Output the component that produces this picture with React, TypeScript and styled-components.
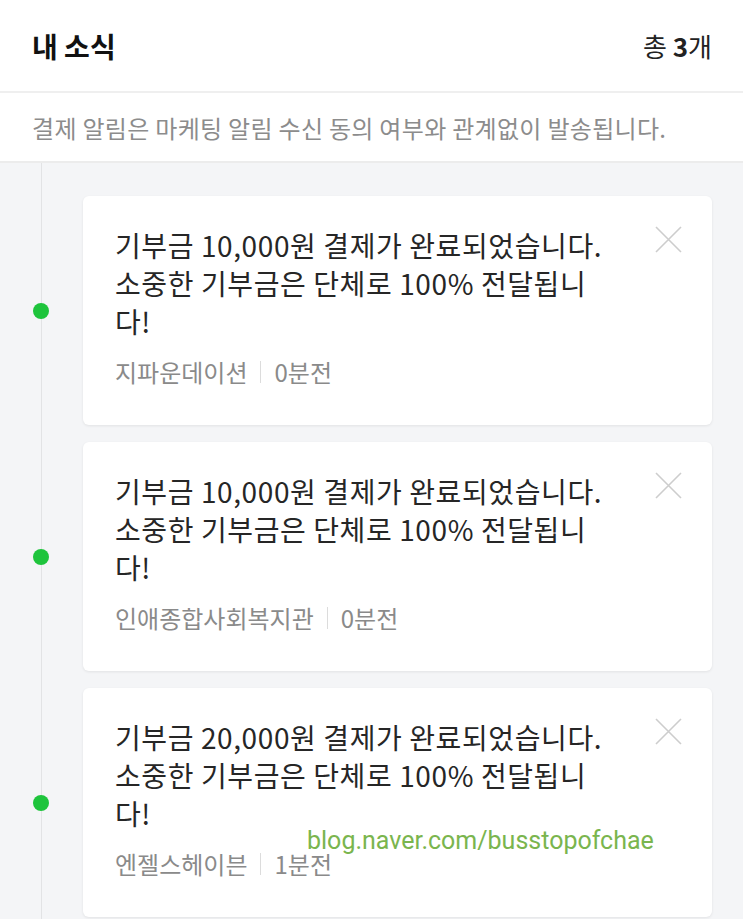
import styled, { createGlobalStyle } from "styled-components";

const GlobalStyle = createGlobalStyle`
  body {
    margin: 0;
    background: #f4f5f7;
    font-family: "Noto Sans CJK KR", "Noto Sans", sans-serif;
  }
`;

const Page = styled.div`
  position: relative;
  min-height: 100vh;
  background: #f4f5f7;
  overflow: hidden;
`;

const Header = styled.header`
  height: 91px;
  padding: 0 31px 0 32px;
  display: flex;
  align-items: center;
  justify-content: space-between;
  background: #fff;
  border-bottom: 2px solid #efefef;
`;

const Title = styled.h1`
  margin: 0;
  font-size: 28px;
  font-weight: 700;
  color: #111;
`;

const Count = styled.div`
  font-size: 26px;
  color: #222;
  b {
    font-weight: 700;
  }
`;

const Notice = styled.p`
  margin: 0;
  height: 68px;
  padding-left: 32px;
  display: flex;
  align-items: center;
  background: #fff;
  border-bottom: 2px solid #ececec;
  font-size: 24px;
  letter-spacing: 0.3px;
  color: #8c8c8c;
`;

const Timeline = styled.ul`
  position: relative;
  list-style: none;
  margin: 0;
  padding: 33px 31px 40px 83px;
  display: flex;
  flex-direction: column;
  gap: 17px;
  &::before {
    content: "";
    position: absolute;
    left: 41px;
    top: 0;
    bottom: 0;
    width: 1px;
    background: #e2e3e5;
  }
`;

const Item = styled.li`
  position: relative;
  &::before {
    content: "";
    position: absolute;
    left: -50px;
    top: 50%;
    width: 16px;
    height: 16px;
    margin-top: -8px;
    border-radius: 50%;
    background: #1ec43c;
  }
`;

const Card = styled.div`
  position: relative;
  background: #fff;
  border-radius: 6px;
  box-shadow: 0 1px 3px rgba(0, 0, 0, 0.08);
  padding: 30px 32px 38px 32px;
`;

const Message = styled.p`
  margin: 0;
  max-width: 495px;
  font-size: 28px;
  line-height: 38px;
  letter-spacing: 0.6px;
  color: #262626;
`;

const Sentence = styled.span`
  display: block;
`;

const Meta = styled.div`
  margin-top: 17px;
  display: flex;
  align-items: center;
  font-size: 24px;
  line-height: 30px;
  color: #8a8a8a;
`;

const Divider = styled.span`
  width: 1px;
  height: 22px;
  margin: 0 13px;
  background: #dcdcdc;
`;

const CloseButton = styled.button`
  position: absolute;
  top: 30px;
  right: 30px;
  width: 27px;
  height: 27px;
  padding: 0;
  border: none;
  background: none;
  cursor: pointer;
  svg {
    display: block;
  }
`;

const Watermark = styled.div`
  position: absolute;
  left: 307px;
  top: 826px;
  font-family: Roboto, "Liberation Sans", sans-serif;
  font-size: 25px;
  color: #7ab54e;
  pointer-events: none;
`;

const notices = [
  { amount: "10,000", org: "지파운데이션", time: "0분전" },
  { amount: "10,000", org: "인애종합사회복지관", time: "0분전" },
  { amount: "20,000", org: "엔젤스헤이븐", time: "1분전" },
];

function CloseIcon() {
  return (
    <svg width="27" height="27" viewBox="0 0 27 27">
      <path d="M1 1 L26 26 M26 1 L1 26" stroke="#cdcdcd" strokeWidth="1.6" fill="none" />
    </svg>
  );
}

function App() {
  return (
    <Page>
      <GlobalStyle />
      <Header>
        <Title>내 소식</Title>
        <Count>
          총 <b>3</b>개
        </Count>
      </Header>
      <Notice>결제 알림은 마케팅 알림 수신 동의 여부와 관계없이 발송됩니다.</Notice>
      <Timeline>
        {notices.map((n, i) => (
          <Item key={i}>
            <Card>
              <Message>
                <Sentence>기부금 {n.amount}원 결제가 완료되었습니다.</Sentence>
                <Sentence>소중한 기부금은 단체로 100% 전달됩니다!</Sentence>
              </Message>
              <Meta>
                {n.org}
                <Divider />
                {n.time}
              </Meta>
              <CloseButton aria-label="닫기">
                <CloseIcon />
              </CloseButton>
            </Card>
          </Item>
        ))}
      </Timeline>
      <Watermark>blog.naver.com/busstopofchae</Watermark>
    </Page>
  );
}

export default App;
